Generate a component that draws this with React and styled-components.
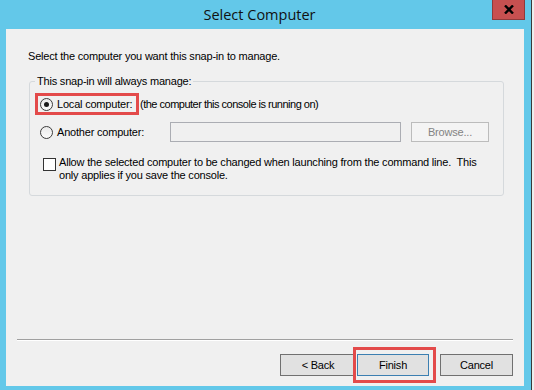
import React from 'react';
import styled, { createGlobalStyle } from 'styled-components';

const GlobalStyle = createGlobalStyle`
  html, body {
    margin: 0;
    padding: 0;
  }
  body {
    width: 534px;
    height: 390px;
    overflow: hidden;
    font-family: "Liberation Sans", Arial, sans-serif;
    font-size: 11px;
    letter-spacing: -0.2px;
    color: #000;
  }
`;

const Screen = styled.div`
  display: flex;
  width: 534px;
  height: 390px;
  overflow: hidden;
`;

// window frame incl. title bar, blue Win8 chrome
const Window = styled.div`
  width: 531px;
  flex: none;
  display: flex;
  flex-direction: column;
  box-sizing: border-box;
  padding: 0 7px 4px 6px;
  background: #63c8e9;
`;

// sliver of another window behind, right edge
const BehindStrip = styled.div`
  flex: 1;
  border-left: 1px solid #3a3a3a;
  background: #eeeeee;
`;

const TitleBar = styled.div`
  display: flex;
  align-items: flex-start;
  height: 29px;
  margin-right: -1px;
`;

const Title = styled.div`
  flex: 1;
  padding-left: 21px;
  text-align: center;
  font-family: "Open Sans", "Noto Sans", sans-serif;
  font-size: 14.5px;
  letter-spacing: 0;
  line-height: 29px;
  color: #111;
`;

const CloseButton = styled.div`
  width: 33px;
  height: 20px;
  box-sizing: border-box;
  display: flex;
  align-items: center;
  justify-content: center;
  background: #c75050;
  border: 1px solid #8f3b3b;
  border-top: none;
`;

const Client = styled.div`
  flex: 1;
  display: flex;
  flex-direction: column;
  padding: 21px 0 10px 0;
  background: #f0f0f0;
`;

const Intro = styled.div`
  margin-left: 22px;
  line-height: 13px;
`;

const GroupBox = styled.fieldset`
  margin: 11px 0 0 23px;
  width: 475px;
  min-width: 0;
  box-sizing: border-box;
  padding: 0 0 13px 0;
  border: 1px solid #d5d9dc;
  border-radius: 3px;
`;

const Legend = styled.legend`
  margin-left: 5px;
  padding: 0 2px;
  line-height: 14px;
`;

const Row = styled.div`
  display: flex;
  align-items: ${p => p.$align || 'center'};
  height: ${p => p.$height}px;
  margin-top: ${p => p.$top}px;
  padding-left: ${p => p.$indent}px;
`;

// red annotation frame drawn over an element
const Marked = styled.div`
  position: relative;
  display: flex;
  align-items: center;

  &::after {
    content: '';
    position: absolute;
    top: ${p => p.$t}px;
    right: ${p => p.$r}px;
    bottom: ${p => p.$b}px;
    left: ${p => p.$l}px;
    border: 3px solid #e34a4a;
    pointer-events: none;
  }
`;

const Radio = styled.span`
  flex: none;
  width: 13px;
  height: 13px;
  box-sizing: border-box;
  border-radius: 50%;
  border: 1px solid #3c3c3c;
  background: linear-gradient(#eaeaea, #fcfcfc);
  display: flex;
  align-items: center;
  justify-content: center;

  &::after {
    content: '';
    display: ${p => (p.$checked ? 'block' : 'none')};
    width: 5px;
    height: 5px;
    border-radius: 50%;
    background: #1a1a1a;
  }
`;

const Caption = styled.span`
  flex: none;
  margin-left: 4px;
  width: ${p => (p.$width ? `${p.$width}px` : 'auto')};
  line-height: 13px;
  white-space: nowrap;
`;

// the hint after "Local computer:" is set tighter in the dialog
const Note = styled.span`
  margin-left: 4px;
  line-height: 13px;
  letter-spacing: -0.5px;
  white-space: nowrap;
`;

const TextField = styled.div`
  width: 231px;
  height: 20px;
  box-sizing: border-box;
  border: 1px solid #abadb3;
  background: #f0f0f0;
`;

const Button = styled.div`
  flex: none;
  width: ${p => p.$width}px;
  height: ${p => p.$height || 22}px;
  margin-left: ${p => p.$gap || 0}px;
  box-sizing: border-box;
  display: flex;
  align-items: center;
  justify-content: center;
  border: 1px solid ${p => (p.$default ? '#3c7fb1' : p.$disabled ? '#bcbcbc' : '#707070')};
  background: ${p => (p.$disabled ? '#f4f4f4' : '#e1e1e1')};
  color: ${p => (p.$disabled ? '#838383' : '#000')};
  line-height: 13px;
`;

const CheckBox = styled.span`
  flex: none;
  width: 13px;
  height: 13px;
  margin-top: 2px;
  box-sizing: border-box;
  border: 1px solid #333;
  background: #fff;
`;

const CheckText = styled.span`
  margin-left: 3px;
  line-height: 13px;
`;

const Spacer = styled.div`
  flex: 1;
`;

const Separator = styled.div`
  margin: 0 11px;
  border-top: 1px solid #a0a0a0;
  border-bottom: 1px solid #fff;
`;

const ButtonRow = styled.div`
  display: flex;
  justify-content: flex-end;
  margin-top: 13px;
  padding-right: 11px;
`;

function CloseGlyph() {
  return (
    <svg width="10" height="9" viewBox="0 0 10 9">
      <path d="M1 0.5 L9 8.5 M9 0.5 L1 8.5" stroke="#000" strokeWidth="2.4" fill="none" />
    </svg>
  );
}

export default function App() {
  return (
    <Screen>
      <GlobalStyle />
      <Window>
        <TitleBar>
          <Title>Select Computer</Title>
          <CloseButton>
            <CloseGlyph />
          </CloseButton>
        </TitleBar>
        <Client>
          <Intro>Select the computer you want this snap-in to manage.</Intro>
          <GroupBox>
            <Legend>This snap-in will always manage:</Legend>
            <Row $height={13} $top={10} $indent={10}>
              <Marked $t={-5} $r={-3} $b={-4} $l={-5}>
                <Radio $checked />
                <Caption $width={79}>Local computer:</Caption>
              </Marked>
              <Note>(the computer this console is running on)</Note>
            </Row>
            <Row $height={20} $top={11} $indent={10}>
              <Radio />
              <Caption $width={113}>Another computer:</Caption>
              <TextField />
              <Button $width={78} $height={20} $gap={10} $disabled>Browse...</Button>
            </Row>
            <Row $height={26} $top={14} $indent={13} $align="flex-start">
              <CheckBox />
              <CheckText>
                Allow the selected computer to be changed when launching from the command line.&nbsp; This
                <br />
                only applies if you save the console.
              </CheckText>
            </Row>
          </GroupBox>
          <Spacer />
          <Separator />
          <ButtonRow>
            <Button $width={76}>&lt; Back</Button>
            <Marked $t={-7} $r={-7} $b={-7} $l={-3}>
              <Button $width={72} $gap={1} $default>Finish</Button>
            </Marked>
            <Button $width={73} $gap={11}>Cancel</Button>
          </ButtonRow>
        </Client>
      </Window>
      <BehindStrip />
    </Screen>
  );
}
